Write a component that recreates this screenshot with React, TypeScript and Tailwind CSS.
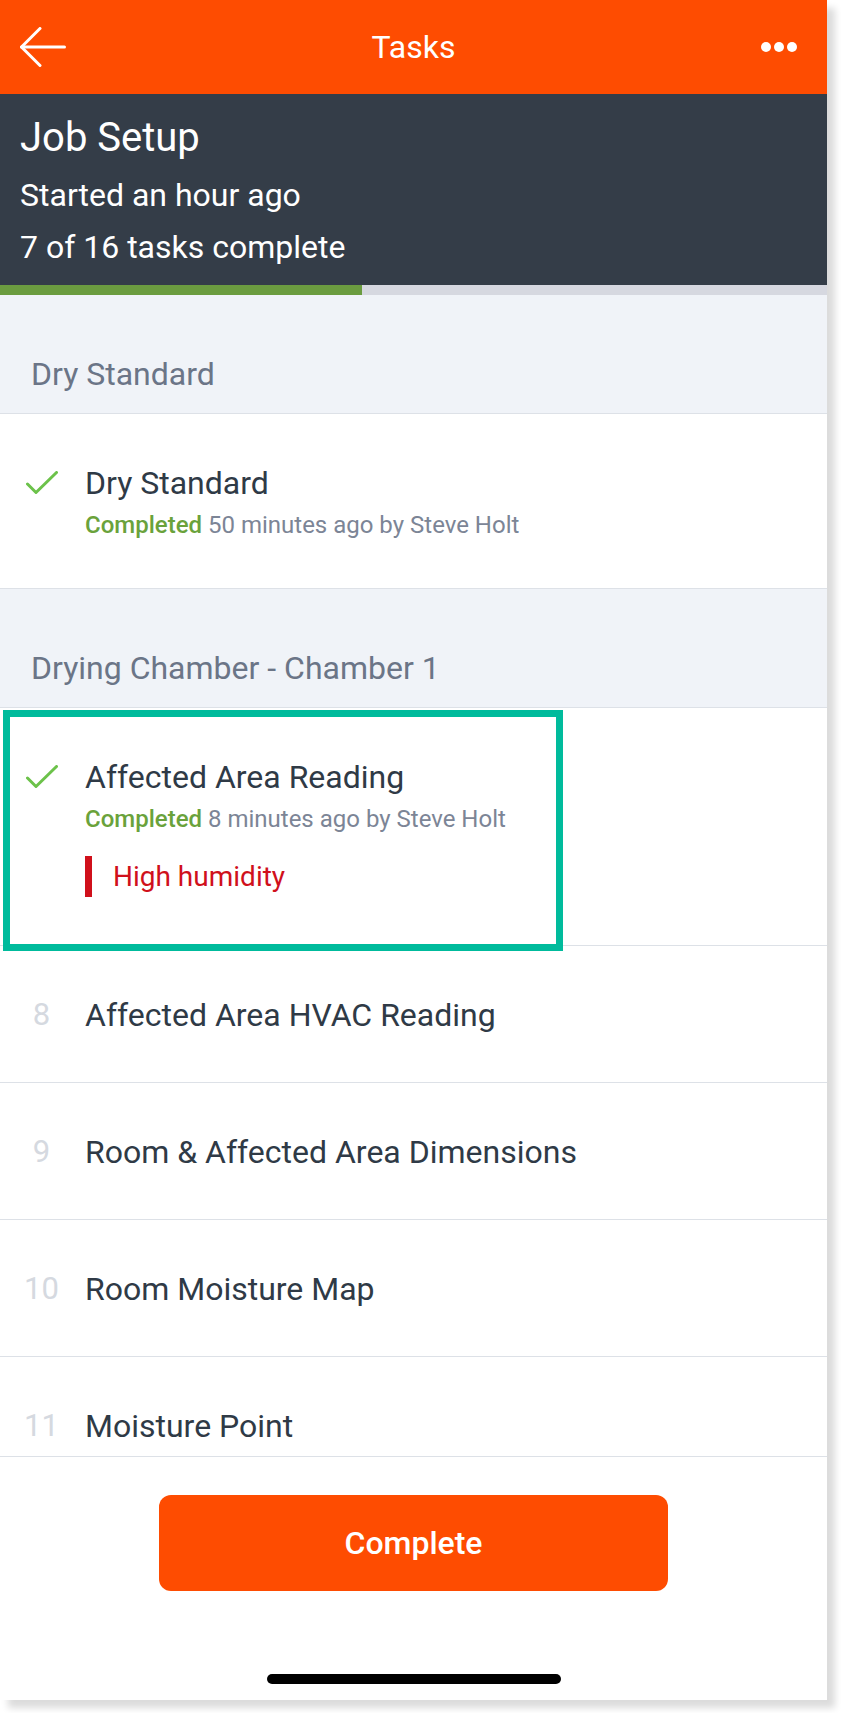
import React from 'react';

interface Task {
  id: number;
  title: string;
  done?: boolean;
  ago?: string;
  alert?: string;
}

interface Section {
  name: string;
  tasks: Task[];
}

const sections: Section[] = [
  {
    name: 'Dry Standard',
    tasks: [{ id: 1, title: 'Dry Standard', done: true, ago: '50 minutes ago by Steve Holt' }],
  },
  {
    name: 'Drying Chamber - Chamber 1',
    tasks: [
      { id: 7, title: 'Affected Area Reading', done: true, ago: '8 minutes ago by Steve Holt', alert: 'High humidity' },
      { id: 8, title: 'Affected Area HVAC Reading' },
      { id: 9, title: 'Room & Affected Area Dimensions' },
      { id: 10, title: 'Room Moisture Map' },
      { id: 11, title: 'Moisture Point' },
    ],
  },
];

const Check = () => (
  <svg width="32" height="24" viewBox="0 0 32 24" fill="none">
    <polyline points="1.5,13 10,21.5 30.5,1.5" stroke="#6cc24a" strokeWidth="3" strokeLinecap="round" strokeLinejoin="round" />
  </svg>
);

const TaskRow: React.FC<{ task: Task }> = ({ task }) => (
  <div className="flex items-start border-b border-[#dde1e7] bg-white pl-[22px] pt-[50px] pb-[48px]">
    <div className="flex h-[38px] w-[39px] shrink-0 items-center justify-center">
      {task.done ? <Check /> : <span className="text-[31px] leading-[38px] text-[#d5d9e0]">{task.id}</span>}
    </div>
    <div className="ml-[24px] flex flex-col">
      <div className="text-[32px] leading-[38px] text-[#2f3a46]">{task.title}</div>
      {task.ago && (
        <div className="mt-[8px] text-[24px] leading-[30px] text-[#7c8596]">
          <span className="font-medium text-[#6aa23b]">Completed</span> {task.ago}
        </div>
      )}
      {task.alert && (
        <div className="mt-[22px] flex h-[41px] items-center">
          <div className="h-[41px] w-[7px] bg-[#d0101b]" />
          <span className="ml-[21px] text-[28px] leading-[41px] text-[#d0101b]">{task.alert}</span>
        </div>
      )}
    </div>
  </div>
);

export default function App() {
  return (
    <div className="min-h-screen bg-white" style={{ fontFamily: 'Roboto, "Noto Sans", sans-serif' }}>
      <div className="relative flex h-[1700px] w-[827px] flex-col overflow-hidden bg-white shadow-[8px_8px_7px_rgba(0,0,0,0.14)]">
        {/* nav bar */}
        <div className="flex h-[94px] shrink-0 items-center justify-between bg-[#fe4c01] px-[20px]">
          <svg width="46" height="40" viewBox="0 0 46 40" fill="none">
            <polyline points="20,1.5 1.5,20 20,38.5" stroke="white" strokeWidth="3" strokeLinecap="round" strokeLinejoin="round" />
            <line x1="1.5" y1="20" x2="44.5" y2="20" stroke="white" strokeWidth="3" strokeLinecap="round" />
          </svg>
          <div className="text-[32px] text-white">Tasks</div>
          <div className="flex w-[46px] items-center justify-end gap-[3px] pr-[10px]">
            <span className="h-[10px] w-[10px] rounded-full bg-white" />
            <span className="h-[10px] w-[10px] rounded-full bg-white" />
            <span className="h-[10px] w-[10px] rounded-full bg-white" />
          </div>
        </div>

        {/* job summary */}
        <div className="shrink-0 bg-[#343d48] px-[20px] pt-[20px] pb-[18px] text-white">
          <div className="text-[40px] leading-[48px]">Job Setup</div>
          <div className="mt-[13px] text-[32px] leading-[40px]">Started an hour ago</div>
          <div className="mt-[12px] text-[32px] leading-[40px]">7 of 16 tasks complete</div>
        </div>
        <div className="h-[10px] shrink-0 bg-[#d6d8e0]">
          <div className="h-full bg-[#6b9c40]" style={{ width: `${(7 / 16) * 100}%` }} />
        </div>

        {/* task list */}
        <div className="flex-1 overflow-hidden bg-[#f0f3f8]">
          {sections.map(section => (
            <div key={section.name}>
              <div className="border-b border-[#dde1e7] px-[31px] pt-[60px] pb-[20px] text-[32px] leading-[38px] text-[#6b7587]">
                {section.name}
              </div>
              {section.tasks.map(task => (
                <TaskRow key={task.id} task={task} />
              ))}
            </div>
          ))}
        </div>

        {/* footer */}
        <div className="flex h-[244px] shrink-0 flex-col items-center border-t border-[#dde1e7] bg-white pt-[38px]">
          <button className="h-[96px] w-[509px] rounded-[12px] bg-[#fe4c01] text-[32px] font-medium text-white">
            Complete
          </button>
          <div className="mt-[83px] h-[10px] w-[294px] rounded-full bg-black" />
        </div>

        {/* highlight callout */}
        <div className="pointer-events-none absolute left-[3px] top-[710px] h-[241px] w-[560px] border-[7px] border-[#00bb9c]" />
      </div>
    </div>
  );
}
